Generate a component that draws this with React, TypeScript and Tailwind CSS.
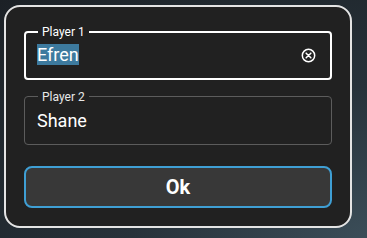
export default function App() {
  return (
    <div
      className="w-[367px] h-[238px] overflow-hidden bg-[radial-gradient(ellipse_at_100%_100%,#3b4d58_0%,#27323a_45%,#1c2126_100%)] pt-[5px] pl-[4px]"
      style={{ fontFamily: "Roboto, 'Liberation Sans', sans-serif" }}
    >
      <div className="w-[348px] h-[223px] rounded-[16px] border-2 border-[#e4e4e4] bg-[#212121] px-[18px] pt-[24px]">
        <div className="relative h-[49px] rounded-[4px] border-2 border-white pl-[11px] pr-[14px] flex items-center">
          <span className="absolute left-[12px] -top-[8px] px-[4px] bg-[#212121] text-[12px] leading-[14px] text-white">
            Player 1
          </span>
          <div className="flex-1">
            <span className="bg-[#3d7a9e] text-white text-[18px] leading-[21px] inline-block">Efren</span>
          </div>
          <svg width="15" height="15" viewBox="0 0 16 16" fill="none" stroke="white" strokeWidth="1.6">
            <circle cx="8" cy="8" r="6.6" />
            <path d="M5.5 5.5l5 5M10.5 5.5l-5 5" strokeLinecap="round" />
          </svg>
        </div>
        <div className="relative mt-[16px] h-[49px] rounded-[4px] border border-[#5c5c5c] pl-[12px] flex items-center">
          <span className="absolute left-[13px] -top-[7px] px-[4px] bg-[#212121] text-[12px] leading-[14px] text-[#e8e8e8]">
            Player 2
          </span>
          <span className="text-white text-[18px] leading-[21px]">Shane</span>
        </div>
        <button className="mt-[21px] w-full h-[42px] rounded-[8px] border-2 border-[#3f9fd4] bg-[#383838] text-white text-[20px] font-bold flex items-center justify-center">
          Ok
        </button>
      </div>
    </div>
  );
}
